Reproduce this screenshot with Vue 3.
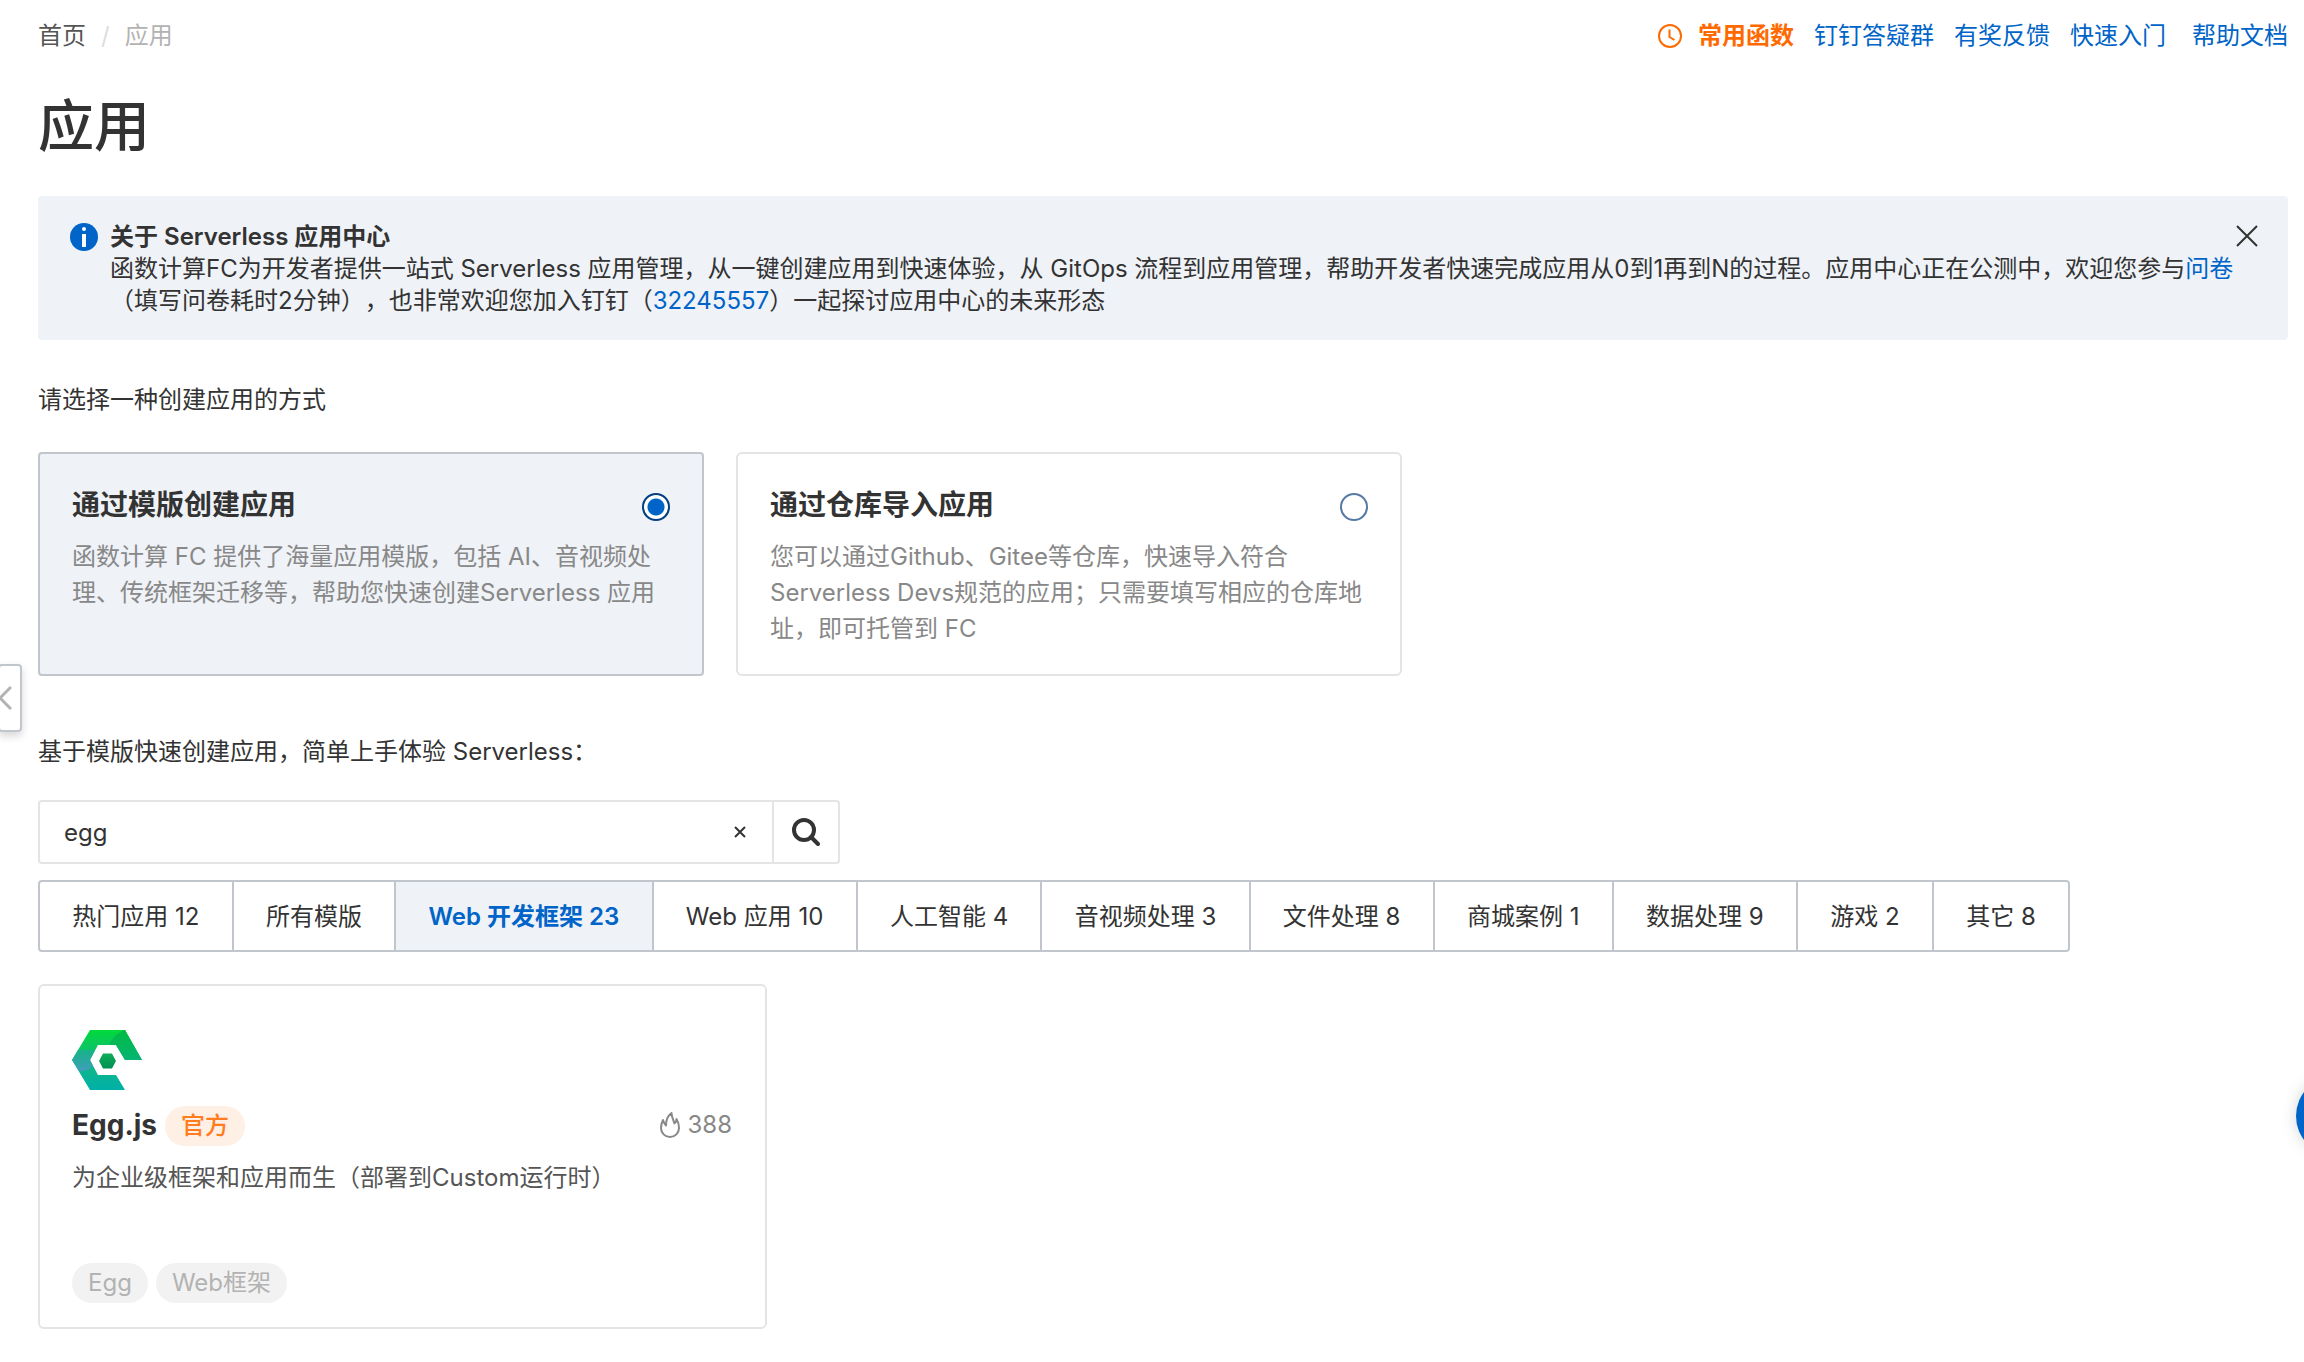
<script setup>
import { ref } from 'vue'

const method = ref('template')
const methods = [
  {
    id: 'template',
    title: '通过模版创建应用',
    desc: '函数计算 FC 提供了海量应用模版，包括 AI、音视频处理、传统框架迁移等，帮助您快速创建Serverless 应用',
  },
  {
    id: 'repo',
    title: '通过仓库导入应用',
    desc: '您可以通过Github、Gitee等仓库，快速导入符合Serverless Devs规范的应用；只需要填写相应的仓库地址，即可托管到 FC',
  },
]

const keyword = ref('egg')
const activeTab = ref('Web 开发框架 23')
const tabs = [
  '热门应用 12',
  '所有模版',
  'Web 开发框架 23',
  'Web 应用 10',
  '人工智能 4',
  '音视频处理 3',
  '文件处理 8',
  '商城案例 1',
  '数据处理 9',
  '游戏 2',
  '其它 8',
]
const tags = ['Egg', 'Web框架']
</script>

<template>
  <div class="page">
    <header class="topbar">
      <nav class="crumbs" aria-label="breadcrumb">
        <a class="crumb" href="#">首页</a>
        <span class="slash">/</span>
        <span class="current">应用</span>
      </nav>
      <nav class="links">
        <a class="recent" href="#">
          <svg width="24" height="24" viewBox="0 0 24 24" fill="none" stroke="currentColor" stroke-width="2">
            <circle cx="12" cy="12" r="11" />
            <path d="M11.500 5.500V13l5 3" />
          </svg>
          常用函数
        </a>
        <a href="#">钉钉答疑群</a>
        <a href="#">有奖反馈</a>
        <a href="#">快速入门</a>
        <a class="docs" href="#">帮助文档</a>
      </nav>
    </header>

    <h1>应用</h1>

    <section class="notice">
      <svg class="info" width="28" height="28" viewBox="0 0 28 28">
        <circle cx="14" cy="14" r="14" fill="#0064c8" />
        <circle cx="14" cy="6" r="2" fill="#fff" />
        <rect x="12" y="11" width="4" height="13" fill="#fff" />
      </svg>
      <div class="notice-body">
        <strong>关于 Serverless 应用中心</strong>
        <p>
          函数计算FC为开发者提供一站式 Serverless 应用管理，从一键创建应用到快速体验，从 GitOps 流程到应用管理，帮助开发者快速完成应用从0到1再到N的过程。应用中心正在公测中，欢迎您参与<a href="#">问卷</a>（填写问卷耗时2分钟），也非常欢迎您加入钉钉（<a href="#">32245557</a>）一起探讨应用中心的未来形态
        </p>
      </div>
      <button class="close" type="button" aria-label="关闭">
        <svg width="22" height="22" viewBox="0 0 22 22" fill="none" stroke="#333" stroke-width="2">
          <path d="M1 1l20 20M21 1L1 21" />
        </svg>
      </button>
    </section>

    <p class="label">请选择一种创建应用的方式</p>

    <div class="methods">
      <label v-for="m in methods" :key="m.id" class="method" :class="{ selected: method === m.id }">
        <span class="method-head">
          <span class="method-title">{{ m.title }}</span>
          <input v-model="method" type="radio" name="method" :value="m.id" />
        </span>
        <span class="method-desc">{{ m.desc }}</span>
      </label>
    </div>

    <p class="label second">基于模版快速创建应用，简单上手体验 Serverless：</p>

    <form class="search" @submit.prevent>
      <input v-model="keyword" type="text" aria-label="搜索模版" />
      <button class="clear" type="button" aria-label="清除" @click="keyword = ''">
        <svg width="12" height="12" viewBox="0 0 12 12" fill="none" stroke="#333" stroke-width="2">
          <path d="M1 1l10 10M11 1L1 11" />
        </svg>
      </button>
      <button class="go" type="submit" aria-label="搜索">
        <svg width="28" height="28" viewBox="0 0 28 28" fill="none" stroke="#333">
          <circle cx="12" cy="12" r="10" stroke-width="4" />
          <path d="M19 19l7 7" stroke-width="4" stroke-linecap="round" />
        </svg>
      </button>
    </form>

    <div class="tabs">
      <button
        v-for="t in tabs"
        :key="t"
        type="button"
        :class="{ active: t === activeTab }"
        @click="activeTab = t"
      >{{ t }}</button>
    </div>

    <article class="app">
      <svg class="logo" width="70" height="60" viewBox="0 0 70 60">
        <defs>
          <linearGradient id="body" x1="0" y1="0" x2="0" y2="1">
            <stop offset="0" stop-color="#00d93c" />
            <stop offset="0.500" stop-color="#12b87c" />
            <stop offset="1" stop-color="#00b0aa" />
          </linearGradient>
          <linearGradient id="arm" x1="0" y1="0" x2="0" y2="1">
            <stop offset="0" stop-color="#00bb41" />
            <stop offset="1" stop-color="#06b573" />
          </linearGradient>
          <linearGradient id="side" x1="0" y1="0" x2="0" y2="1">
            <stop offset="0" stop-color="#16b487" />
            <stop offset="1" stop-color="#3f9dbb" />
          </linearGradient>
          <linearGradient id="core" x1="0" y1="0" x2="0" y2="1">
            <stop offset="0" stop-color="#10ad58" />
            <stop offset="1" stop-color="#008f53" />
          </linearGradient>
        </defs>
        <path d="M18 0H53L70 30H53L44 15H26L18 30L26 45H44L53 60H18L0 30Z" fill="url(#body)" />
        <path d="M37 15Q42 4 52 0H53L70 30H53L44 15Z" fill="url(#arm)" />
        <path d="M6 20L0 30L7 41Q16 42 21 36L18 30L23 20Z" fill="url(#side)" />
        <path d="M31 23.500H40L44 31L40 38.500H31L27 31Z" fill="url(#core)" />
      </svg>
      <div class="app-head">
        <h2>Egg.js</h2>
        <span class="official">官方</span>
        <span class="heat">
          <svg width="20" height="26" viewBox="0 0 20 26" fill="none" stroke="currentColor" stroke-width="2" stroke-linejoin="round">
            <path d="M11.500 1C7.500 4 6 8 6 13.500C4.500 12 3.500 10.500 3 8C1.500 11 1 13.500 1 16C1 21 5 25 10 25S19 21 19 16C19 12.500 18 9.500 16.500 7C16.500 9 16 10.500 14.500 11.500C13.500 8 11.500 5 11.500 1Z" />
          </svg>
          388
        </span>
      </div>
      <p class="app-desc">为企业级框架和应用而生（部署到Custom运行时）</p>
      <div class="tags">
        <span v-for="t in tags" :key="t" class="tag">{{ t }}</span>
      </div>
    </article>

    <button class="collapse" type="button" aria-label="收起">
      <svg width="12" height="24" viewBox="0 0 12 24" fill="none" stroke="#b3b3b3" stroke-width="3">
        <path d="M11 1L0 12L11 23" />
      </svg>
    </button>
    <button class="assistant" type="button" aria-label="助手"></button>
  </div>
</template>

<style>
body {
  margin: 0;
  background: #fff;
  overflow-x: hidden;
}
</style>

<style scoped>
.page {
  position: relative;
  overflow: hidden;
  min-height: 100vh;
  box-sizing: border-box;
  padding: 18px 16px 32px 38px;
  font: 24px/36px Inter, "Noto Sans CJK SC", sans-serif;
  text-spacing-trim: space-all;
  color: #333;
}
.page * {
  box-sizing: border-box;
}
a {
  color: #0064c8;
  text-decoration: none;
}
p,
h1,
h2 {
  margin: 0;
}
button {
  font: inherit;
  color: inherit;
  background: none;
  border: 0;
  padding: 0;
  cursor: pointer;
}
svg {
  display: block;
  flex: none;
}
.topbar {
  display: flex;
  justify-content: space-between;
}
.crumbs {
  display: flex;
  gap: 15px;
}
.crumb {
  color: #555;
}
.slash {
  color: #ddd;
}
.current {
  color: #b3b3b3;
}
.links {
  display: flex;
  gap: 20px;
}
.recent {
  display: flex;
  align-items: center;
  gap: 16px;
  color: #ff6a00;
  font-weight: 600;
}
.docs {
  margin-left: 6px;
}
h1 {
  margin-top: 36px;
  font-size: 56px;
  line-height: 72px;
  font-weight: 500;
}
.notice {
  display: flex;
  align-items: flex-start;
  gap: 12px;
  margin-top: 34px;
  padding: 25px 30px 23px 32px;
  border-radius: 4px;
  background: #eff2f7;
  line-height: 32px;
}
.info {
  margin-top: 2px;
}
.notice-body {
  flex: 1;
}
.notice strong {
  display: block;
  font-weight: 600;
}
.close {
  margin-top: 4px;
  margin-left: -12px;
}
.label {
  margin-top: 42px;
}
.methods {
  display: flex;
  gap: 32px;
  margin-top: 34px;
}
.method {
  width: 666px;
  min-height: 224px;
  padding: 31px 32px 25px;
  border: 2px solid #e3e4e6;
  border-radius: 6px;
  cursor: pointer;
}
.method.selected {
  border-color: #c0c6cc;
  background: #eff2f7;
  border-radius: 4px;
}
.method-head {
  display: flex;
  justify-content: space-between;
  align-items: center;
  line-height: 40px;
}
.method-title {
  font-size: 28px;
  font-weight: 600;
}
.method input {
  appearance: none;
  width: 28px;
  height: 28px;
  margin: 4px 0 0;
  border: 2px solid #577aa5;
  border-radius: 50%;
  background: #fff;
}
.method input:checked {
  border-color: #003f80;
  background: radial-gradient(circle, #0064c8 0 8px, #fff 9px);
}
.method-desc {
  display: block;
  margin-top: 14px;
  color: #888;
}
.label.second {
  margin-top: 58px;
}
.search {
  display: flex;
  align-items: stretch;
  width: 802px;
  height: 64px;
  margin-top: 30px;
  border: 2px solid #e3e4e6;
  border-radius: 4px;
}
.search input {
  flex: 1;
  min-width: 0;
  padding: 2px 24px 0;
  border: 0;
  outline: 0;
  background: none;
  font: inherit;
  color: inherit;
}
.clear {
  display: flex;
  align-items: center;
  padding: 0 26px;
}
.go {
  display: flex;
  align-items: center;
  justify-content: center;
  width: 66px;
  border-left: 2px solid #e3e4e6;
}
.tabs {
  display: flex;
  width: 2032px;
  max-width: 100%;
  margin-top: 16px;
  border: 2px solid #c0c6cc;
  border-radius: 4px;
}
.tabs button {
  flex: 1 0 auto;
  height: 68px;
  padding: 2px 32px 0;
  white-space: nowrap;
}
.tabs button + button {
  border-left: 2px solid #c0c6cc;
}
.tabs .active {
  background: #eff2f7;
  color: #0064c8;
  font-weight: 600;
}
.app {
  width: 729px;
  margin-top: 32px;
  padding: 44px 32px 24px;
  border: 2px solid #e3e4e6;
  border-radius: 6px;
}
.app-head {
  display: flex;
  align-items: center;
  gap: 8px;
  margin-top: 16px;
}
h2 {
  font-size: 28px;
  line-height: 38px;
  padding-bottom: 2px;
  font-weight: 700;
}
.official,
.tag {
  padding: 0 16px;
  border-radius: 20px;
  line-height: 40px;
}
.official {
  background: #fff0e5;
  color: #ff7d1f;
  font-weight: 500;
}
.heat {
  display: flex;
  align-items: center;
  gap: 7px;
  margin-left: auto;
  padding: 0 1px 2px 0;
  color: #888;
}
.app-desc {
  margin-top: 14px;
  color: #555;
}
.tags {
  display: flex;
  gap: 8px;
  margin-top: 67px;
}
.tag {
  background: #f2f2f2;
  color: #b3b3b3;
}
.collapse {
  position: absolute;
  left: -2px;
  top: 664px;
  width: 24px;
  height: 68px;
  border: 2px solid #c0c6cc;
  border-radius: 4px;
  background: #fff;
  box-shadow: 0 4px 8px rgba(0, 0, 0, 0.16);
}
.assistant {
  position: absolute;
  right: -72px;
  top: 1076px;
  width: 80px;
  height: 80px;
  border-radius: 50%;
  background: #0064c8;
  box-shadow: 0 0 16px rgba(0, 0, 0, 0.16);
}
</style>
